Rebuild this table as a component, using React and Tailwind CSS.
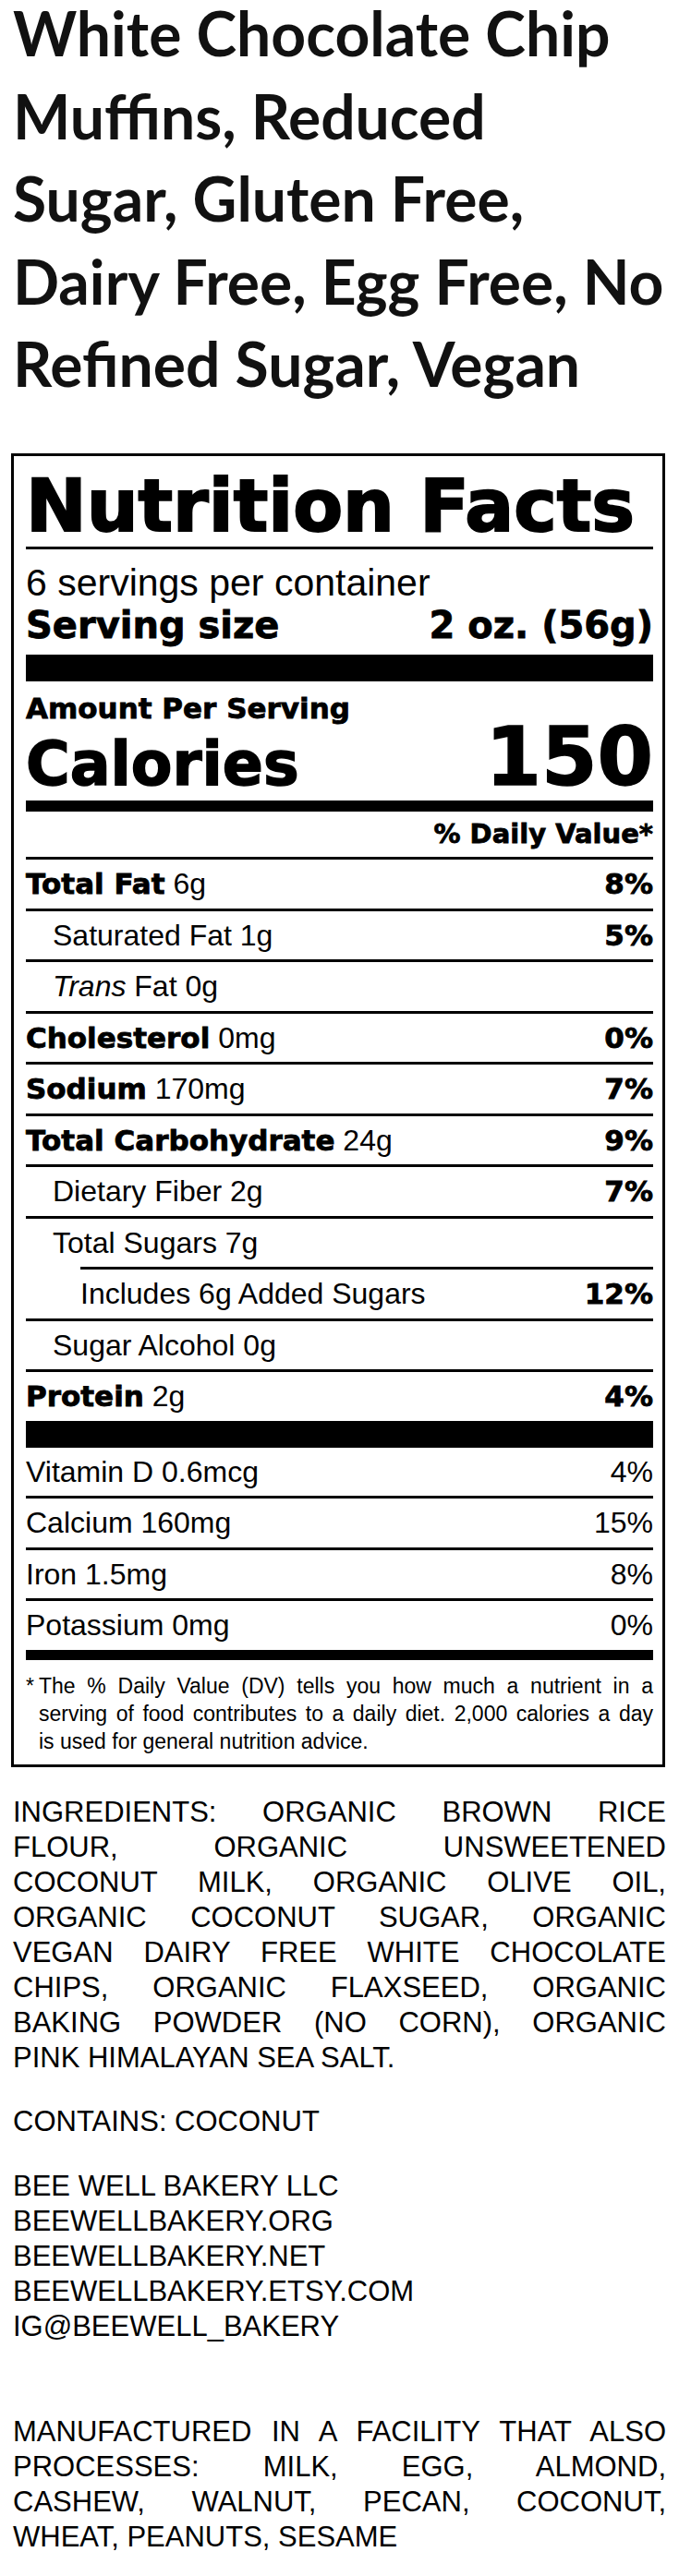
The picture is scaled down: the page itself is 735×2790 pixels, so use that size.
import React from "react";

const REG = "font-['Liberation_Sans',Arial,sans-serif] font-normal";
const BLD = "font-['DejaVu_Sans',sans-serif] font-bold [-webkit-text-stroke:0.8px_black]";
const JUST = "text-justify [text-align-last:justify]";

function B({ children }) {
  return <span className={`${BLD} text-[31px]`}>{children}</span>;
}

function Line({ indent }) {
  return <div className={indent ? "ml-[59px] h-[3px] bg-black" : "h-[3px] bg-black"} />;
}

function Row({ children, dv, dvRegular, indent }) {
  return (
    <div className={`${REG} flex h-[52.5px] items-center justify-between text-[32px] leading-[52.5px]`}>
      <div className={`whitespace-nowrap ${indent || ""}`}>{children}</div>
      {dv ? (
        <div className={dvRegular ? "whitespace-nowrap" : `${BLD} whitespace-nowrap text-[31px]`}>{dv}</div>
      ) : null}
    </div>
  );
}

const titleLines = [
  "White Chocolate Chip",
  "Muffins, Reduced",
  "Sugar, Gluten Free,",
  "Dairy Free, Egg Free, No",
  "Refined Sugar, Vegan",
];

const ingredients = [
  "INGREDIENTS: ORGANIC BROWN RICE",
  "FLOUR, ORGANIC UNSWEETENED",
  "COCONUT MILK, ORGANIC OLIVE OIL,",
  "ORGANIC COCONUT SUGAR, ORGANIC",
  "VEGAN DAIRY FREE WHITE CHOCOLATE",
  "CHIPS, ORGANIC FLAXSEED, ORGANIC",
  "BAKING POWDER (NO CORN), ORGANIC",
  "PINK HIMALAYAN SEA SALT.",
];

const contact = [
  "BEE WELL BAKERY LLC",
  "BEEWELLBAKERY.ORG",
  "BEEWELLBAKERY.NET",
  "BEEWELLBAKERY.ETSY.COM",
  "IG@BEEWELL_BAKERY",
];

const facility = [
  "MANUFACTURED IN A FACILITY THAT ALSO",
  "PROCESSES: MILK, EGG, ALMOND,",
  "CASHEW, WALNUT, PECAN, COCONUT,",
  "WHEAT, PEANUTS, SESAME",
];

function Justified({ lines }) {
  return lines.map((l, i) => (
    <div key={i} className={i < lines.length - 1 ? JUST : "whitespace-nowrap"}>
      {l}
    </div>
  ));
}

export default function App() {
  return (
    <div className="bg-white px-[14px] text-black">
      <h1 className="-mt-[9px] font-['Lato',sans-serif] text-[66px] font-bold leading-[89.5px] text-[#111]">
        {titleLines.map((t) => (
          <div key={t} className="whitespace-nowrap">
            {t}
          </div>
        ))}
      </h1>

      <div className="ml-[-2px] mr-[1px] mt-[52.5px] border-[3px] border-black pb-[10.5px] pl-[13px] pr-[10px] pt-[15px]">
        <div className={`${BLD} whitespace-nowrap text-[78.5px] leading-[78px] [-webkit-text-stroke:2px_black]`}>
          Nutrition Facts
        </div>
        <div className="mt-[5px] h-[3px] bg-black" />
        <div className={`${REG} mt-[13px] text-[41px] leading-[46px]`}>6 servings per container</div>
        <div className={`${BLD} flex justify-between text-[40px] leading-[46px]`}>
          <span>Serving size</span>
          <span>2 oz. (56g)</span>
        </div>
        <div className="mt-[9px] h-[29px] bg-black" />
        <div className={`${BLD} mt-[11px] text-[31px] leading-[36px]`}>Amount Per Serving</div>
        <div className={`${BLD} mt-[3px] flex items-baseline justify-between [-webkit-text-stroke:1.5px_black]`}>
          <span className="text-[65px] leading-[64px]">Calories</span>
          <span className="text-[87px] leading-[64px]">150</span>
        </div>
        <div className="mt-[7px] h-[12px] bg-black" />
        <div className={`${BLD} mt-[7px] text-right text-[29px] leading-[34px]`}>% Daily Value*</div>
        <div className="mt-[8px]" />
        <Line />
        <Row dv="8%">
          <B>Total Fat</B> 6g
        </Row>
        <Line />
        <Row dv="5%" indent="pl-[29px]">
          Saturated Fat 1g
        </Row>
        <Line />
        <Row indent="pl-[29px]">
          <i>Trans</i> Fat 0g
        </Row>
        <Line />
        <Row dv="0%">
          <B>Cholesterol</B> 0mg
        </Row>
        <Line />
        <Row dv="7%">
          <B>Sodium</B> 170mg
        </Row>
        <Line />
        <Row dv="9%">
          <B>Total Carbohydrate</B> 24g
        </Row>
        <Line />
        <Row dv="7%" indent="pl-[29px]">
          Dietary Fiber 2g
        </Row>
        <Line />
        <Row indent="pl-[29px]">Total Sugars 7g</Row>
        <Line indent />
        <Row dv="12%" indent="pl-[59px]">
          Includes 6g Added Sugars
        </Row>
        <Line />
        <Row indent="pl-[29px]">Sugar Alcohol 0g</Row>
        <Line />
        <Row dv="4%">
          <B>Protein</B> 2g
        </Row>
        <div className="h-[29px] bg-black" />
        <Row dv="4%" dvRegular>
          Vitamin D 0.6mcg
        </Row>
        <Line />
        <Row dv="15%" dvRegular>
          Calcium 160mg
        </Row>
        <Line />
        <Row dv="8%" dvRegular>
          Iron 1.5mg
        </Row>
        <Line />
        <Row dv="0%" dvRegular>
          Potassium 0mg
        </Row>
        <div className="h-[11px] bg-black" />
        <div className={`${REG} mt-[13px] flex text-[23px] leading-[30px]`}>
          <span className="w-[14px] shrink-0">*</span>
          <div className="min-w-0 flex-1">
            <div className={JUST}>The % Daily Value (DV) tells you how much a nutrient in a</div>
            <div className={JUST}>serving of food contributes to a daily diet. 2,000 calories a day</div>
            <div>is used for general nutrition advice.</div>
          </div>
        </div>
      </div>

      <div className={`${REG} text-[31px] leading-[38px]`}>
        <div className="mt-[30px]">
          <Justified lines={ingredients} />
        </div>
        <div className="mt-[31.4px]">CONTAINS: COCONUT</div>
        <div className="mt-[31.4px]">
          {contact.map((c) => (
            <div key={c} className="whitespace-nowrap">
              {c}
            </div>
          ))}
        </div>
        <div className="mt-[76px]">
          <Justified lines={facility} />
        </div>
      </div>
    </div>
  );
}
